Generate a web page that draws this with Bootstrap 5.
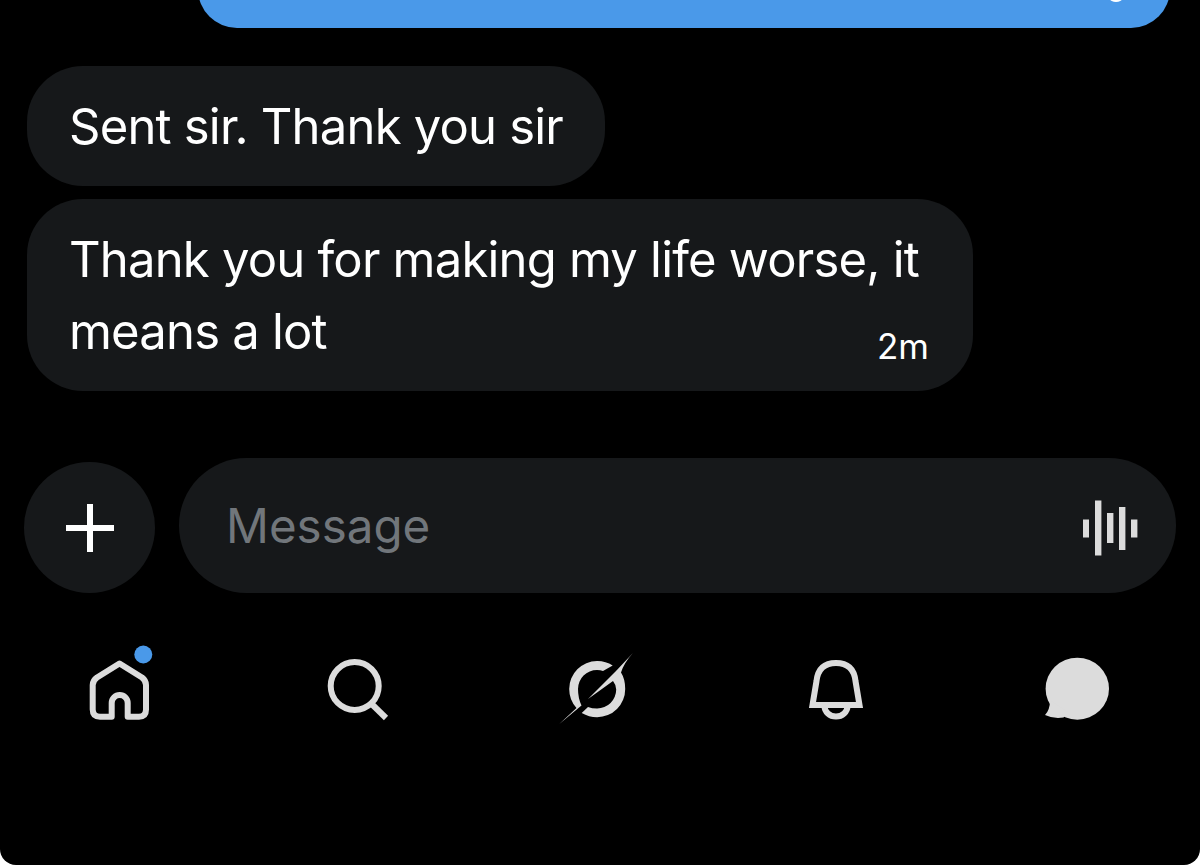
<!DOCTYPE html>
<html lang="en">
<head>
    <meta charset="UTF-8">
    <meta name="viewport" content="width=device-width, initial-scale=1.0">
    <title>Messages</title>
    <link rel="stylesheet" href="https://cdn.jsdelivr.net/npm/bootstrap@5.3.0/dist/css/bootstrap.min.css">
    <style>
        html, body {
            height: 100%;
            margin: 0;
            background: #fff;
        }
        .chat-screen {
            width: 1200px;
            height: 865px;
            overflow: hidden;
            background: #000;
            border-radius: 0 0 16px 16px;
            font-family: Inter, "Liberation Sans", sans-serif;
            color: #fff;
        }
        .sent-bubble {
            height: 78px;
            margin: -50px 30px 0 198px;
            background: #4a99e9;
            border-radius: 48px;
        }
        .sent-check {
            top: 46px;
            right: 48px;
            width: 12px;
            height: 6px;
            background: #fff;
        }
        .thread {
            padding: 38px 0 0 27px;
            gap: 13px;
        }
        .msg-bubble {
            background: #16181a;
            border-radius: 56px;
            font-size: 49px;
            line-height: 72px;
            letter-spacing: -0.8px;
            padding: 25px 42px 23px 42px;
        }
        .msg-wide {
            width: 946px;
            padding-right: 44px;
        }
        .msg-time {
            font-size: 35px;
            line-height: 40px;
            letter-spacing: 0;
            margin-top: 30px;
        }
        .composer {
            margin-top: 67px;
            padding: 0 24px;
            gap: 24px;
        }
        .plus-btn {
            width: 131px;
            height: 131px;
            background: #16181a;
            flex: none;
        }
        .message-box {
            height: 135px;
            background: #16181a;
            border-radius: 68px;
            padding: 0 38px 0 47px;
            font-size: 47.5px;
            color: #71767b;
        }
        .tab-bar {
            margin-top: 57px;
            padding-left: 80px;
            gap: 159px;
        }
        .tab-bar svg {
            width: 80px;
            height: 80px;
            flex: none;
            overflow: visible;
        }
        .ico-line {
            fill: none;
            stroke: #dcdcdc;
            stroke-width: 6;
            stroke-linejoin: round;
        }
        .ico-sharp {
            stroke-linejoin: miter;
        }
        .ico-fill {
            fill: #dcdcdc;
        }
    </style>
</head>
<body>
    <div class="chat-screen d-flex flex-column">
        <div class="sent-bubble position-relative flex-shrink-0">
            <span class="sent-check position-absolute rounded-circle"></span>
        </div>

        <div class="thread d-flex flex-column align-items-start">
            <div class="msg-bubble">Sent sir. Thank you sir</div>
            <div class="msg-bubble msg-wide">
                <div>Thank you for making my life worse, it</div>
                <div class="d-flex justify-content-between align-items-start">
                    <span>means a lot</span>
                    <span class="msg-time">2m</span>
                </div>
            </div>
        </div>

        <div class="composer d-flex align-items-end">
            <div class="plus-btn rounded-circle d-flex align-items-center justify-content-center">
                <svg width="50" height="50" viewBox="0 0 50 50">
                    <path d="M25 1V49M1 25H49" stroke="#fff" stroke-width="6" fill="none"/>
                </svg>
            </div>
            <div class="message-box flex-grow-1 d-flex align-items-center justify-content-between">
                <span>Message</span>
                <svg width="56" height="60" viewBox="0 0 56 60">
                    <g class="ico-fill">
                        <rect x="1" y="23.5" width="6" height="18"/>
                        <rect x="13" y="4.5" width="6.4" height="55"/>
                        <rect x="25" y="17" width="6.4" height="30"/>
                        <rect x="37" y="11" width="6.4" height="43"/>
                        <rect x="49" y="23.5" width="6.4" height="18"/>
                    </g>
                </svg>
            </div>
        </div>

        <nav class="tab-bar d-flex">
            <svg viewBox="0 0 80 80">
                <path class="ico-line" d="M39.5 13.5L17 27.5Q12.7 30.5 12.7 35V59.5Q12.7 66.7 20 66.7H31.7V53A8 8 0 0 1 47.7 53V66.7H59Q66 66.7 66 59.5V35Q66 30.5 62 27.5Z"/>
                <circle cx="63.3" cy="4.5" r="9" fill="#4a99e9"/>
            </svg>
            <svg viewBox="0 0 80 80">
                <circle class="ico-line" cx="35.7" cy="36" r="24"/>
                <path class="ico-line" d="M52.7 54L67 68"/>
            </svg>
            <svg viewBox="0 0 80 80">
                <path class="ico-fill" d="M54.7 15.5A28 28 0 0 0 39 11A28 28 0 0 0 11.2 39Q11.2 50 18.5 58L1.3 74L23.5 55.5Q20 48 20 39A19 19 0 0 1 39 20Q42.5 20 45 21Z"/>
                <path class="ico-fill" d="M74.7 3.3L58 21L30 49L55 31Q58.2 35 58.2 39.5A19 19 0 0 1 39 58.5Q34 58.5 30 57L23.7 63Q31 67.2 39 67.2A28 28 0 0 0 67.2 39Q67.2 29 63 22.5Q66 13 74.7 3.3Z"/>
            </svg>
            <svg viewBox="0 0 80 80">
                <path class="ico-line ico-sharp" d="M15.5 55H62.5L58.5 31Q56.5 13 39 13Q21.5 13 19.5 31Z"/>
                <path class="ico-line" d="M27.5 56A11.5 10.5 0 0 0 50.5 56"/>
            </svg>
            <svg viewBox="0 0 80 80">
                <ellipse class="ico-fill" cx="41.3" cy="38.7" rx="31.7" ry="31"/>
                <path class="ico-fill" d="M9 65Q14 60 14 50L32 62Q30 66 27.5 67.5Q17 69 9 65Z"/>
            </svg>
        </nav>
    </div>

    <script src="https://cdn.jsdelivr.net/npm/bootstrap@5.3.0/dist/js/bootstrap.bundle.min.js"></script>
</body>
</html>
